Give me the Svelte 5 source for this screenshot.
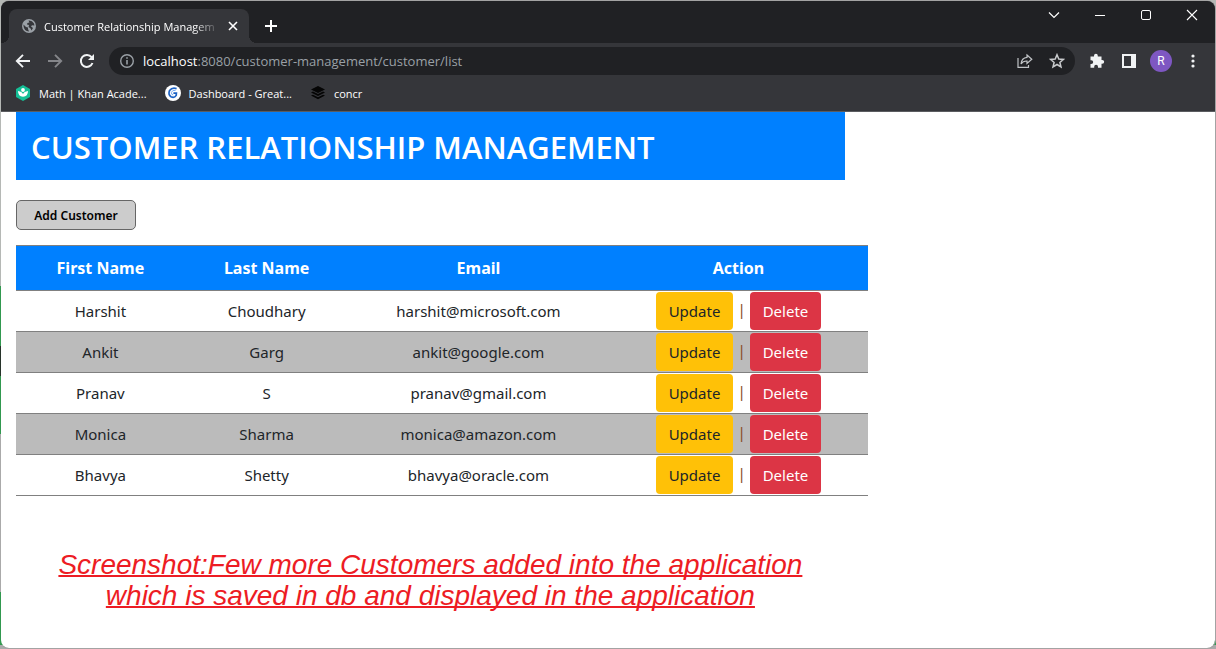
<script>
  const bookmarks = [
    { name: 'Math | Khan Acade...', icon: 'khan' },
    { name: 'Dashboard - Great...', icon: 'great' },
    { name: 'concr', icon: 'layers' }
  ];

  const customers = [
    { first: 'Harshit', last: 'Choudhary', email: 'harshit@microsoft.com' },
    { first: 'Ankit', last: 'Garg', email: 'ankit@google.com' },
    { first: 'Pranav', last: 'S', email: 'pranav@gmail.com' },
    { first: 'Monica', last: 'Sharma', email: 'monica@amazon.com' },
    { first: 'Bhavya', last: 'Shetty', email: 'bhavya@oracle.com' }
  ];
</script>

<div class="window">
  <header class="browser">
    <div class="tabstrip">
      <div class="tab">
        <svg width="14" height="14" viewBox="0 0 14 14">
          <circle cx="7" cy="7" r="7" fill="#9aa0a6" />
          <path d="M1.5 5.5 L4 8 L6 8.4 L6 10 L7 12.6 Q2 12 1.5 7Z M6.5 1.6 Q10 1.2 12 4.6 L12.4 6.6 L10 6.2 L9 7.4 L11 9 L9.5 11.6 L8.6 9.6 L6.6 8 L7 6 L5 5.6 L5.4 4 L7.4 3.4Z" fill="#35363a" />
        </svg>
        <span class="tab-title">Customer Relationship Managem</span>
        <button class="plain" aria-label="Close tab">
          <svg width="10" height="10" viewBox="0 0 10 10"><path d="M1 1L9 9M9 1L1 9" stroke="#fff" stroke-width="1.6" /></svg>
        </button>
      </div>
      <button class="plain new-tab" aria-label="New tab">
        <svg width="12" height="12" viewBox="0 0 12 12"><path d="M6 0V12M0 6H12" stroke="#fff" stroke-width="2" /></svg>
      </button>
      <div class="window-controls">
        <button class="plain" aria-label="Search tabs">
          <svg width="12" height="12" viewBox="0 0 12 12"><path d="M1 3.5L6 8.5L11 3.5" fill="none" stroke="#fff" stroke-width="1.2" /></svg>
        </button>
        <button class="plain" aria-label="Minimize">
          <svg width="12" height="12" viewBox="0 0 12 12"><path d="M1 6.5H11" stroke="#fff" /></svg>
        </button>
        <button class="plain" aria-label="Maximize">
          <svg width="12" height="12" viewBox="0 0 12 12"><rect x="1.5" y="1.5" width="9" height="9" rx="1.5" fill="none" stroke="#fff" /></svg>
        </button>
        <button class="plain" aria-label="Close">
          <svg width="12" height="12" viewBox="0 0 12 12"><path d="M1 1L11 11M11 1L1 11" stroke="#fff" stroke-width="1.1" /></svg>
        </button>
      </div>
    </div>

    <div class="toolbar">
      <button class="plain" aria-label="Back">
        <svg width="16" height="16" viewBox="0 0 16 16"><path d="M15 8H2.5M8 1.8L1.8 8L8 14.2" fill="none" stroke="#f1f3f4" stroke-width="1.9" /></svg>
      </button>
      <button class="plain" aria-label="Forward">
        <svg width="16" height="16" viewBox="0 0 16 16"><path d="M1 8H13.5M8 1.8L14.2 8L8 14.2" fill="none" stroke="#85868a" stroke-width="1.9" /></svg>
      </button>
      <button class="plain" aria-label="Reload">
        <svg width="16" height="16" viewBox="0 0 16 16"><path d="M13.5 10A6 6 0 1 1 12.6 4.2" fill="none" stroke="#f1f3f4" stroke-width="2" /><path d="M15 1V7H9Z" fill="#f1f3f4" /></svg>
      </button>
      <div class="address">
        <svg width="16" height="16" viewBox="0 0 16 16"><circle cx="8" cy="8" r="6.3" fill="none" stroke="#9aa0a6" stroke-width="1.4" /><path d="M8 7V11.5M8 4.2V5.8" stroke="#9aa0a6" stroke-width="1.6" /></svg>
        <span class="url"><b>localhost</b>:8080/customer-management/customer/list</span>
        <button class="plain" aria-label="Share">
          <svg width="16" height="16" viewBox="0 0 16 16"><path d="M1 5V14.3H11.5V12M10 2L14.8 6.2L10 10.5V8Q6 7.8 4 11Q4.6 5 10 4.4Z" fill="none" stroke="#c0c3c6" stroke-width="1.2" /></svg>
        </button>
        <button class="plain" aria-label="Bookmark this tab">
          <svg width="16" height="16" viewBox="0 0 16 16"><path d="M8 1.7L9.8 6L14.4 6.4L10.9 9.4L12 14L8 11.5L4 14L5.1 9.4L1.6 6.4L6.2 6Z" fill="none" stroke="#c8cacc" stroke-width="1.5" /></svg>
        </button>
      </div>
      <button class="plain" aria-label="Extensions">
        <svg width="16" height="16" viewBox="0 0 16 16"><path d="M1.5 3.5H5V2.7A1.8 1.8 0 0 1 8.8 2.7V3.5H12.5V7H13.3A1.8 1.8 0 0 1 13.3 10.7H12.5V14.7H9V13.7A1.8 1.8 0 0 0 5.2 13.7V14.7H1.5V11H2.3A1.8 1.8 0 0 0 2.3 7.2H1.5Z" fill="#f1f3f4" /></svg>
      </button>
      <button class="plain" aria-label="Side panel">
        <svg width="16" height="16" viewBox="0 0 16 16"><path d="M1 1H15V15H1ZM3 3V13H10V3Z" fill="#f1f3f4" fill-rule="evenodd" /></svg>
      </button>
      <button class="plain avatar" aria-label="Profile">R</button>
      <button class="plain" aria-label="Menu">
        <svg width="16" height="16" viewBox="0 0 16 16" fill="#f1f3f4"><circle cx="8" cy="3" r="1.6" /><circle cx="8" cy="8" r="1.6" /><circle cx="8" cy="13" r="1.6" /></svg>
      </button>
    </div>

    <nav class="bookmarks">
      {#each bookmarks as mark}
        <a href="#top">
          {#if mark.icon === 'khan'}
            <svg width="16" height="16" viewBox="0 0 16 16"><path d="M8 0L15 4V12L8 16L1 12V4Z" fill="#14bf96" /><circle cx="8" cy="5" r="1.9" fill="#fff" /><path d="M3 6Q7 6.5 8 9Q9 6.5 13 6Q13 11.5 8 11.8Q3 11.5 3 6Z" fill="#fff" /></svg>
          {:else if mark.icon === 'great'}
            <svg width="16" height="16" viewBox="0 0 16 16"><circle cx="8" cy="8" r="8" fill="#fff" /><path d="M11.6 3.6Q7 2.2 4.6 5.4Q2.8 9.6 6 11.8Q9.4 13.4 11.2 10.4L11.4 8.2H8.4" fill="none" stroke="#1c62c4" stroke-width="1.7" /><path d="M10.6 5.4Q7.4 4.6 6.4 7.4Q6.2 9.6 8.2 10" fill="none" stroke="#75a9ef" /></svg>
          {:else}
            <svg width="16" height="16" viewBox="0 0 16 16" fill="#050505"><path d="M8 1L15 4.5L8 8L1 4.5Z" /><path d="M1 7.4L3 6.5L8 9L13 6.5L15 7.4L8 11Z" /><path d="M1 10.6L3 9.7L8 12.2L13 9.7L15 10.6L8 14.2Z" /></svg>
          {/if}
          {mark.name}
        </a>
      {/each}
    </nav>
  </header>

  <main id="top">
    <h1>CUSTOMER RELATIONSHIP MANAGEMENT</h1>
    <button class="add">Add Customer</button>
    <table>
      <thead>
        <tr>
          <th class="first">First Name</th>
          <th class="last">Last Name</th>
          <th class="email">Email</th>
          <th>Action</th>
        </tr>
      </thead>
      <tbody>
        {#each customers as c}
          <tr>
            <td>{c.first}</td>
            <td>{c.last}</td>
            <td>{c.email}</td>
            <td>
              <div class="actions">
                <a class="btn update" href="#top">Update</a>
                <span class="bar">|</span>
                <a class="btn delete" href="#top">Delete</a>
              </div>
            </td>
          </tr>
        {/each}
      </tbody>
    </table>
    <p class="note">Screenshot:Few more Customers added into the application<br />which is saved in db and displayed in the application</p>
  </main>
</div>

<style>
  :global(body) {
    margin: 0;
    background: linear-gradient(#b5b8b5 0 286px, #31984f 286px 346px, #27332a 346px 376px, #31984f 376px 434px, #aaa 434px 592px, #31984f 592px 645px, #aaa 645px);
  }
  .window {
    box-sizing: border-box;
    min-height: 100vh;
    border: 1px solid #a3a3a3;
    border-left-color: transparent;
    border-radius: 9px;
    background: #fff;
    background-clip: padding-box;
    overflow: hidden;
    font-family: 'Open Sans', 'Noto Sans', sans-serif;
  }
  .plain {
    display: flex;
    align-items: center;
    justify-content: center;
    padding: 0;
    border: 0;
    background: none;
    color: #fff;
    flex-shrink: 0;
  }
  svg {
    display: block;
    flex-shrink: 0;
  }
  .browser {
    background: #35363a;
    border-bottom: 1px solid #5b5c60;
    color: #fff;
    font-size: 11px;
    font-weight: 500;
  }
  .tabstrip {
    display: flex;
    height: 42px;
    background: #202124;
  }
  .tab {
    position: relative;
    box-sizing: border-box;
    display: flex;
    align-items: center;
    gap: 8px;
    width: 240px;
    margin: 8px 0 0 8px;
    padding: 0 11px 0 13px;
    border-radius: 8px 8px 0 0;
    background: #35363a;
  }
  .tab::before,
  .tab::after {
    content: '';
    position: absolute;
    bottom: 0;
    width: 8px;
    height: 8px;
  }
  .tab::before {
    right: 100%;
    background: radial-gradient(circle at 0 0, transparent 8px, #35363a 8px);
  }
  .tab::after {
    left: 100%;
    background: radial-gradient(circle at 100% 0, transparent 8px, #35363a 8px);
  }
  .tab-title {
    flex: 1;
    min-width: 0;
    white-space: nowrap;
    mask-image: linear-gradient(90deg, #000 85%, transparent);
  }
  .new-tab {
    width: 44px;
    padding-top: 8px;
  }
  .window-controls {
    display: flex;
    align-items: center;
    height: 28px;
    margin-left: auto;
  }
  .window-controls .plain {
    width: 46px;
  }
  .toolbar {
    display: flex;
    align-items: center;
    gap: 16px;
    height: 36px;
    padding: 0 14px;
  }
  .address {
    display: flex;
    align-items: center;
    gap: 16px;
    flex: 1;
    height: 28px;
    margin-left: -2px;
    margin-right: -2px;
    padding: 0 10px;
    border-radius: 14px;
    background: #202124;
  }
  .url {
    flex: 1;
    margin-left: -8px;
    color: #9aa0a6;
    font-size: 13px;
    font-weight: 400;
    white-space: nowrap;
  }
  .url b {
    color: #fff;
    font-weight: 400;
  }
  .avatar {
    width: 22px;
    height: 22px;
    margin: 0 -3px;
    border-radius: 50%;
    background: #7e57c2;
    font: 12px Roboto, sans-serif;
  }
  .bookmarks {
    display: flex;
    align-items: center;
    gap: 18px;
    height: 28px;
    padding: 0 14px 4px;
  }
  .bookmarks a {
    display: flex;
    align-items: center;
    gap: 8px;
    color: #fff;
    text-decoration: none;
  }
  main {
    padding: 0 15px;
  }
  h1 {
    box-sizing: border-box;
    width: 70%;
    margin: 0 0 20px;
    padding: 16px 15px 14px;
    background: #0080ff;
    color: #fff;
    font-size: 31px;
    font-weight: 600;
    line-height: 38px;
    white-space: nowrap;
  }
  .add {
    display: block;
    width: 120px;
    height: 30px;
    margin-bottom: 15px;
    padding: 0;
    border: 1px solid #666;
    border-radius: 5px;
    background: #ccc;
    color: #000;
    font: 600 12px 'Noto Sans', sans-serif;
  }
  table {
    width: 72%;
    border-collapse: collapse;
    table-layout: fixed;
    color: #212529;
    font-family: 'Noto Sans', sans-serif;
    font-size: 15px;
    line-height: 24px;
    text-align: center;
  }
  tr {
    border-top: 1px solid gray;
    border-bottom: 1px solid gray;
  }
  th {
    padding: 10px;
    background: #0080ff;
    color: #fff;
    font-size: 16px;
    font-weight: 700;
  }
  .first {
    width: 19.8%;
  }
  .last {
    width: 19.2%;
  }
  .email {
    width: 30.5%;
  }
  th,
  td {
    box-sizing: border-box;
  }
  td {
    padding: 1px;
  }
  tbody tr:nth-child(even) {
    background: #bbb;
  }
  .actions {
    display: flex;
    justify-content: center;
    gap: 4px;
  }
  .btn {
    padding: 7px 13px;
    border-radius: 4px;
    text-decoration: none;
  }
  .update {
    background: #ffc107;
    color: #212529;
  }
  .delete {
    background: #dc3545;
    color: #fff;
  }
  .bar {
    padding-top: 5px;
    color: #8a4a20;
  }
  .note {
    width: 70%;
    margin: 53px 0 36px;
    color: #ed1c24;
    font: italic 28px/31px 'Liberation Sans', Arial, sans-serif;
    text-align: center;
    text-decoration: underline;
    text-decoration-thickness: 2px;
    text-decoration-skip-ink: none;
    white-space: nowrap;
  }
</style>
